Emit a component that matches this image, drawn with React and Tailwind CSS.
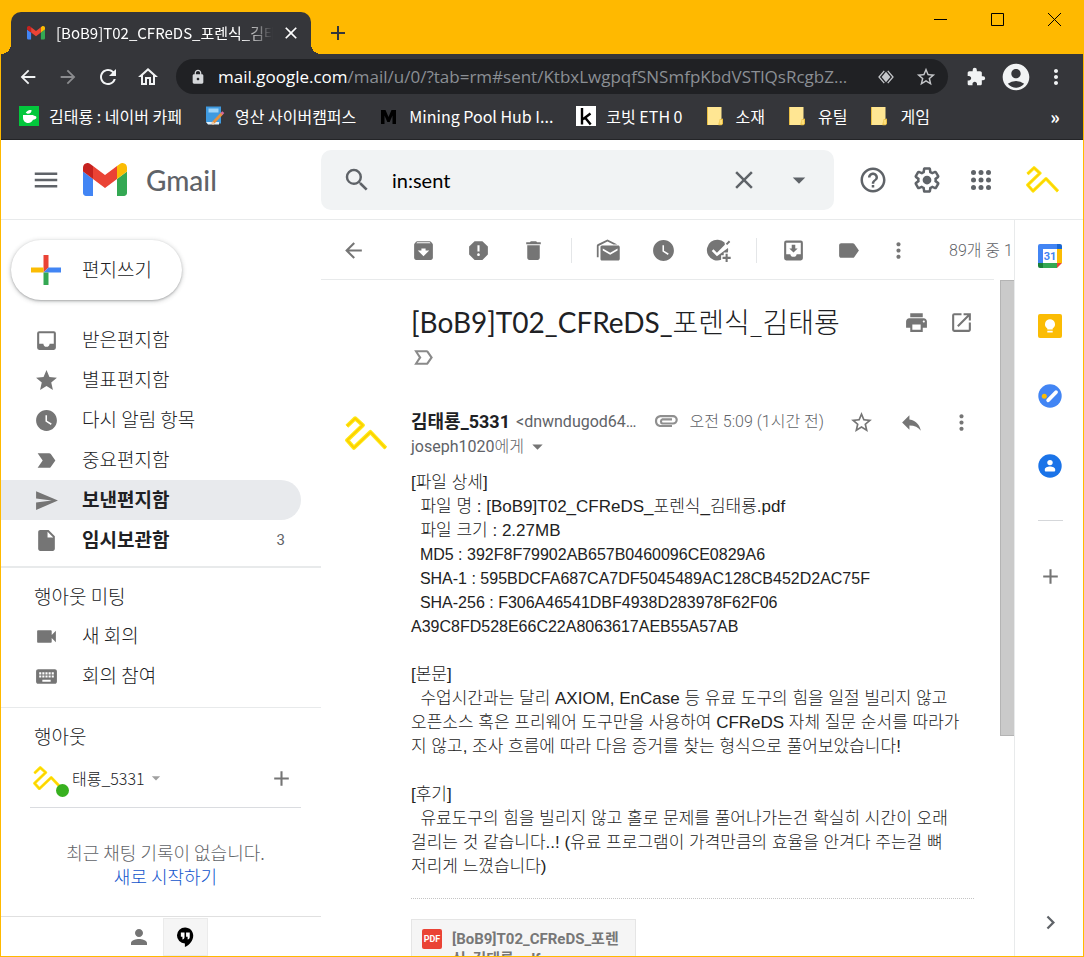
import {
  MdArrowBack, MdArrowForward, MdRefresh, MdOutlineHome, MdLock, MdStarBorder, MdExtension, MdAccountCircle,
  MdMoreVert, MdMenu, MdSearch, MdClose, MdArrowDropDown, MdHelpOutline, MdArchive, MdReport, MdDelete,
  MdWatchLater, MdLabel, MdPrint, MdOpenInNew, MdStar, MdLabelImportant, MdSend, MdInsertDriveFile,
  MdVideocam, MdKeyboard, MdPerson, MdReply, MdAdd, MdChevronRight, MdLabelImportantOutline,
} from "react-icons/md";

const UI = "font-['Noto_Sans_CJK_KR',sans-serif]";
const ROBOTO = "font-[Roboto,'Noto_Sans_CJK_KR',sans-serif]";

function GmailMark({ className }) {
  return (
    <svg viewBox="52 42 88 66" className={className} aria-hidden="true">
      <path fill="#4285f4" d="M58 108h14V74L52 59v43c0 3.32 2.69 6 6 6" />
      <path fill="#34a853" d="M120 108h14c3.32 0 6-2.69 6-6V59l-20 15" />
      <path fill="#fbbc04" d="M120 48v26l20-15v-8c0-7.42-8.47-11.65-14.4-7.2" />
      <path fill="#ea4335" d="M72 74V48l24 18 24-18v26L96 92" />
      <path fill="#c5221f" d="M52 51v8l20 15V48l-5.6-4.2c-5.94-4.45-14.4-.22-14.4 7.2" />
    </svg>
  );
}

function Squiggle({ className }) {
  return (
    <svg viewBox="0 0 33 27" className={className} fill="none" aria-hidden="true">
      <path d="M1.5 8 8 1.8l6 5.4L1.7 19 7 25l13-12.4L32 25.3" stroke="#fdea14" strokeWidth="3.2" strokeLinejoin="round" />
      <path d="M1.5 8 8 1.8l6 5.4L1.7 19 7 25l13-12.4L32 25.3" stroke="#ffcd00" strokeWidth="1.3" strokeLinejoin="round" />
    </svg>
  );
}

function SettingsIcon({ className }) {
  return (
    <svg viewBox="0 0 24 24" className={className} fill="currentColor" aria-hidden="true">
      <path d="M13.85 22.25h-3.7c-.74 0-1.36-.54-1.45-1.27l-.27-1.89c-.27-.14-.53-.29-.79-.46l-1.8.72c-.7.26-1.47-.03-1.81-.65L2.2 15.53c-.35-.66-.2-1.44.36-1.88l1.53-1.19c-.01-.15-.02-.3-.02-.46 0-.15.01-.31.02-.46l-1.52-1.19c-.59-.45-.74-1.26-.37-1.88l1.85-3.19c.34-.62 1.11-.9 1.79-.63l1.81.73c.26-.17.52-.32.78-.46l.27-1.91c.09-.7.71-1.25 1.44-1.25h3.7c.74 0 1.36.54 1.45 1.27l.27 1.89c.27.14.53.29.79.46l1.8-.72c.71-.26 1.48.03 1.82.65l1.84 3.18c.36.66.2 1.44-.36 1.88l-1.52 1.19c.01.15.02.3.02.46s-.01.31-.02.46l1.52 1.19c.56.45.72 1.23.37 1.86l-1.86 3.22c-.34.62-1.11.9-1.8.63l-1.8-.72c-.26.17-.52.32-.78.46l-.27 1.91c-.1.68-.72 1.22-1.46 1.22zm-3.23-2h2.76l.37-2.55.53-.22c.44-.18.88-.44 1.34-.78l.45-.34 2.38.96 1.38-2.4-2.03-1.58.07-.56c.03-.26.06-.51.06-.78s-.03-.53-.06-.78l-.07-.56 2.03-1.58-1.39-2.4-2.39.96-.45-.35c-.42-.32-.87-.58-1.33-.77l-.52-.22-.37-2.55h-2.76l-.37 2.55-.53.21c-.44.19-.88.44-1.34.79l-.45.33-2.38-.95-1.39 2.39 2.03 1.58-.07.56a7 7 0 0 0-.06.79c0 .26.02.53.06.78l.07.56-2.03 1.58 1.38 2.4 2.39-.96.45.35c.43.33.86.58 1.33.77l.53.22.38 2.55z" />
      <circle cx="12" cy="12" r="3.5" />
    </svg>
  );
}

function AppsIcon({ className }) {
  return (
    <svg viewBox="0 0 24 24" className={className} fill="currentColor" aria-hidden="true">
      {[6, 12, 18].map((cy) => [6, 12, 18].map((cx) => <circle key={`${cx}-${cy}`} cx={cx} cy={cy} r="2" />))}
    </svg>
  );
}

function InboxIcon({ className }) {
  return (
    <svg viewBox="0 0 24 24" className={className} fill="currentColor" aria-hidden="true">
      <path d="M19 3H5a2 2 0 0 0-2 2v14a2 2 0 0 0 2 2h14a2 2 0 0 0 2-2V5a2 2 0 0 0-2-2zm0 12h-4c0 1.66-1.34 3-3 3s-3-1.34-3-3H5V5h14v10z" />
    </svg>
  );
}

function MarkUnreadIcon({ className }) {
  return (
    <svg viewBox="0 0 24 24" className={className} fill="currentColor" aria-hidden="true">
      <path d="M20.5 6.2 11 1.5 2 5.800C1.300 6.200.8 6.900.8 7.600v10.900h1.700V7.600L11 3.400l5.800 2.800z" />
      <path d="M21.300 7.300H5.800c-.9 0-1.500.7-1.500 1.500v11.400c0 .9.700 1.500 1.500 1.500h15.500c.9 0 1.500-.7 1.500-1.500V8.800c0-.9-.7-1.500-1.500-1.500zm-.6 4.700-7.100 4-7.100-4v-1.900l7.100 4 7.100-4z" />
    </svg>
  );
}

function AddTaskIcon({ className }) {
  return (
    <svg viewBox="0 0 24 24" className={className} fill="currentColor" aria-hidden="true">
      <path d="M17.800 4.400A10 10 0 1 0 14.500 20.900V16.500H17V14h3.900a10 10 0 0 0 .2-4.500L10.500 17.500 5.500 12.500 7.200 10.800l3.300 3.300 7.600-7.600z" />
      <path d="m19 5.500 3-3 1.300 1.300-3 3zM18.800 15.200h2v2.900h2.900v2h-2.900V23h-2v-2.900h-2.900v-2h2.900z" />
    </svg>
  );
}

function MoveToIcon({ className }) {
  return (
    <svg viewBox="0 0 24 24" className={className} fill="currentColor" aria-hidden="true">
      <path d="M19 2.500H5a2 2 0 0 0-2 2v15a2 2 0 0 0 2 2h14a2 2 0 0 0 2-2v-15a2 2 0 0 0-2-2zm0 13h-4c0 1.500-1.300 2.500-3 2.500s-3-1-3-2.500H5v-11h14v11zM16 10h-2.300V6.500h-3.400V10H8l4 4 4-4z" />
    </svg>
  );
}

function ClipIcon({ className }) {
  return (
    <svg viewBox="0 0 24 12" className={className} fill="none" stroke="currentColor" strokeWidth="2.200" aria-hidden="true">
      <path d="M18 11H6.300a5 5 0 0 1 0-9.900H19a3.700 3.700 0 0 1 0 7.400H8.500a2.200 2.200 0 0 1 0-4.200H18" />
    </svg>
  );
}

function HangoutsIcon({ className }) {
  return (
    <svg viewBox="0 0 20 24" className={className} aria-hidden="true">
      <path fill="#000" d="M10 1.500a8.800 8.800 0 0 0-.3 17.600V23c4.800-2.400 9.100-6.600 9.100-12.700C18.800 5.400 14.900 1.500 10 1.500z" />
      <path fill="#fff" d="M5.300 7h4v5c0 1.500-.9 2.500-2.300 2.700v-3H5.300zM11 7h4v5c0 1.500-.9 2.500-2.300 2.700v-3H11z" />
    </svg>
  );
}

function CalendarIcon() {
  return (
    <svg viewBox="0 0 24 24" className="size-6" aria-hidden="true">
      <path fill="#4285f4" d="M2 0h17v5H5v14H0V2a2 2 0 0 1 2-2z" />
      <path fill="#1967d2" d="M19 0h3a2 2 0 0 1 2 2v3h-5z" />
      <path fill="#fbbc04" d="M19 5h5v14h-5z" />
      <path fill="#34a853" d="M5 19h14v5H5z" />
      <path fill="#188038" d="M0 19h5v5H2a2 2 0 0 1-2-2z" />
      <path fill="#ea4335" d="M19 19h5l-5 5z" />
      <path fill="#fff" d="M5 5h14v14H5z" />
      <text x="12" y="16.300" textAnchor="middle" fontSize="11" fontWeight="700" fontFamily="Roboto, sans-serif" fill="#4285f4">31</text>
    </svg>
  );
}

function KeepIcon() {
  return (
    <svg viewBox="0 0 24 24" className="size-6" aria-hidden="true">
      <rect width="24" height="24" rx="2" fill="#fbbc04" />
      <path fill="#fff" d="M12 5.200a5 5 0 0 0-2.700 9.200v1h5.400v-1A5 5 0 0 0 12 5.200zM9.300 16.800h5.400v1.700H9.300z" />
    </svg>
  );
}

function TasksIcon() {
  return (
    <svg viewBox="0 0 24 24" className="size-6" aria-hidden="true">
      <circle cx="12" cy="12" r="11.700" fill="#4285f4" />
      <path d="M10.200 16.300 18 8.200" stroke="#fff" strokeWidth="3.800" strokeLinecap="round" />
      <circle cx="6.300" cy="12.300" r="2.500" fill="#fbbc04" />
    </svg>
  );
}

function ContactsIcon() {
  return (
    <svg viewBox="0 0 24 24" className="size-6" aria-hidden="true">
      <circle cx="12" cy="12" r="11.700" fill="#1a73e8" />
      <circle cx="12" cy="8.600" r="2.700" fill="#fff" />
      <path fill="#fff" d="M6.800 16.600v-1.200c0-2 2.700-3 5.200-3s5.200 1 5.200 3v1.200a.9.900 0 0 1-.9.900H7.700a.9.900 0 0 1-.9-.9z" />
    </svg>
  );
}

function CafeIcon() {
  return (
    <svg viewBox="0 0 20 20" className="size-5" aria-hidden="true">
      <path fill="#03c73c" d="M0 0h20v20H0z" />
      <path fill="#fff" d="M4 9h10.500v.8c1.600-.3 3 .4 2.900 1.800s-1.600 2.300-3.400 2.200c-.8 2-2.500 3.200-4.800 3.200C6 17 4 14.500 4 11.500zM6.700 6.800C8 4.500 10 4 12.500 4c.3 2.400-1.500 4-4 3.800z" />
    </svg>
  );
}

function NoteIcon() {
  return (
    <svg viewBox="0 0 20 20" className="size-5" aria-hidden="true">
      <path fill="#3f9ae0" d="M1 .5h15v17H3l-2-2z" />
      <path fill="#9fd3f7" d="M3.500 2.500h10v4h-10z" />
      <path fill="#dff1fd" d="M1 16h13v2.500H3z" />
      <path stroke="#e8913c" strokeWidth="2.800" d="m8.500 16.500 8.500-9" />
      <path stroke="#f2c9a0" strokeWidth="2.800" d="m7 18 1.600-1.600" />
      <path stroke="#d76a9a" strokeWidth="2.800" d="m16.500 8 1.800-1.900" />
    </svg>
  );
}

function MiningIcon() {
  return (
    <svg viewBox="0 0 20 20" className="size-5" aria-hidden="true">
      <path fill="#000" d="M2 18V4h4.500L9.500 11l3-7H17v14h-3.500v-8.500L10.700 16H8.300L5.500 9.500V18z" />
    </svg>
  );
}

function KorbitIcon() {
  return (
    <svg viewBox="0 0 20 20" className="size-5" aria-hidden="true">
      <path fill="#fff" d="M0 0h20v20H0z" />
      <path stroke="#000" strokeWidth="2.400" fill="none" d="M6 2v16.500M14.500 7.500 7 13.200M9 11.500l5.700 7" />
    </svg>
  );
}

function FolderIcon() {
  return (
    <svg viewBox="0 0 20 20" className="size-5" aria-hidden="true">
      <path fill="#ffe693" d="M1.500 1h14v18h-14z" />
      <path fill="#e9bf45" d="M1 1h1v18H1zM12.500 18l1-4.500 3.500-1V18l-1.500 1.300h-3z" />
      <path fill="#ffdf7a" d="M13.500 14h2.500v4.300h-2.500z" />
    </svg>
  );
}

const bookmarks = [
  { icon: CafeIcon, label: "김태룡 : 네이버 카페" },
  { icon: NoteIcon, label: "영산 사이버캠퍼스" },
  { icon: MiningIcon, label: "Mining Pool Hub I..." },
  { icon: KorbitIcon, label: "코빗 ETH 0" },
  { icon: FolderIcon, label: "소재" },
  { icon: FolderIcon, label: "유틸" },
  { icon: FolderIcon, label: "게임" },
];

function ChromeButton({ label, children, className = "text-[#f1f3f4]" }) {
  return (
    <button type="button" aria-label={label} className={`flex h-9 w-10 shrink-0 items-center justify-center ${className}`}>
      {children}
    </button>
  );
}

function BrowserFrame() {
  return (
    <div className={`shrink-0 ${UI}`}>
      <div className="flex h-[53px] justify-between bg-[#ffb900]">
        <div className="flex pt-[11px] pl-[10px]">
          <div className="relative flex h-[42px] w-[300px] items-center rounded-t-[10px] bg-[#35363a] pr-2.5 pl-4">
            <span className="absolute bottom-0 -left-2.5 size-2.5 bg-[radial-gradient(circle_at_0_0,transparent_10px,#35363a_10px)]" />
            <span className="absolute -right-2.5 bottom-0 size-2.5 bg-[radial-gradient(circle_at_100%_0,transparent_10px,#35363a_10px)]" />
            <GmailMark className="w-[18px] shrink-0" />
            <span className="ml-[11px] flex-1 overflow-hidden text-[15px] leading-6 whitespace-nowrap text-white [mask-image:linear-gradient(to_right,black_86%,transparent)]">
              [BoB9]T02_CFReDS_포렌식_김태룡
            </span>
            <button type="button" aria-label="탭 닫기" className="ml-2 text-white"><MdClose className="size-5" /></button>
          </div>
          <button type="button" aria-label="새 탭" className="ml-[15px] text-[#35363a]"><MdAdd className="size-6" /></button>
        </div>
        <div className="flex h-[37px] text-black">
          <button type="button" aria-label="최소화" className="flex w-[57px] items-center justify-center">
            <svg viewBox="0 0 13 13" className="size-[13px]" stroke="currentColor"><path d="M0 6.500h13" /></svg>
          </button>
          <button type="button" aria-label="최대화" className="flex w-[57px] items-center justify-center">
            <svg viewBox="0 0 13 13" className="size-[13px]" stroke="currentColor" fill="none"><path d="M.5.5h12v12H.5z" /></svg>
          </button>
          <button type="button" aria-label="닫기" className="flex w-[57px] items-center justify-center">
            <svg viewBox="0 0 13 13" className="size-[13px]" stroke="currentColor"><path d="m0 0 13 13M13 0 0 13" /></svg>
          </button>
        </div>
      </div>
      <div className="flex h-[45px] items-center bg-[#35363a] px-[7px]">
        <ChromeButton label="뒤로"><MdArrowBack className="size-[22px]" /></ChromeButton>
        <ChromeButton label="앞으로" className="text-[#8b8c8f]"><MdArrowForward className="size-[22px]" /></ChromeButton>
        <ChromeButton label="새로고침"><MdRefresh className="size-6" /></ChromeButton>
        <ChromeButton label="홈"><MdOutlineHome className="size-6" /></ChromeButton>
        <div className="mx-2 flex h-[35px] min-w-0 flex-1 items-center rounded-full bg-[#202124] pr-[2px] pl-[14px]">
          <MdLock className="size-4 shrink-0 text-[#d5d7da]" />
          <a href="#sent" className="ml-3 min-w-0 flex-1 truncate font-['Open_Sans',sans-serif] text-[17px] leading-6 text-[#8b8f94]">
            <span className="text-white">mail.google.com</span>/mail/u/0/?tab=rm#sent/KtbxLwgpqfSNSmfpKbdVSTlQsRcgbZ...
          </a>
          <ChromeButton label="보기" className="text-[#c4c6c9]">
            <svg viewBox="0 0 18 16" className="h-[14px] w-4" aria-hidden="true">
              <path d="M7 1 1 8l6 7M11 1l6 7-6 7" fill="none" stroke="currentColor" strokeWidth="1.500" />
              <path d="m9 2 5 6-5 6-5-6z" fill="currentColor" />
            </svg>
          </ChromeButton>
          <ChromeButton label="북마크" className="text-[#c4c6c9]"><MdStarBorder className="size-[22px]" /></ChromeButton>
        </div>
        <ChromeButton label="확장 프로그램"><MdExtension className="size-5" /></ChromeButton>
        <ChromeButton label="프로필"><MdAccountCircle className="size-8" /></ChromeButton>
        <ChromeButton label="메뉴"><MdMoreVert className="size-6" /></ChromeButton>
      </div>
      <nav aria-label="북마크" className="flex h-[41px] items-center gap-[23px] border-b border-[#232427] bg-[#35363a] pr-4 pb-[6px] pl-[18px]">
        {bookmarks.map(({ icon: Icon, label }) => (
          <a key={label} href="#bookmark" className="flex items-center gap-2.5 text-[16px] leading-6 whitespace-nowrap text-white">
            <Icon />
            {label}
          </a>
        ))}
        <button type="button" aria-label="북마크 더보기" className="ml-auto w-6 text-[18px] leading-6 font-bold text-white">»</button>
      </nav>
    </div>
  );
}

function HeaderButton({ label, children }) {
  return (
    <button type="button" aria-label={label} className="flex size-[54px] shrink-0 items-center justify-center text-[#5f6368]">
      {children}
    </button>
  );
}

function GmailHeader() {
  return (
    <header className="flex h-20 shrink-0 items-center border-b border-[#e8eaeb]">
      <div className="flex w-80 shrink-0 items-center pl-[30px]">
        <button type="button" aria-label="기본 메뉴" className="text-[#5f6368]"><MdMenu className="size-[30px]" /></button>
        <a href="#inbox" className="ml-[22px] flex items-center gap-[19px] font-[Lato,sans-serif] text-[28px] leading-9 font-medium text-[#5f6368]">
          <GmailMark className="w-11" />
          Gmail
        </a>
      </div>
      <form role="search" className="flex h-[60px] min-w-0 flex-1 items-center rounded-[10px] bg-[#f1f3f4] pr-2 text-[#5f6368]">
        <button type="button" aria-label="검색" className="ml-[21px]"><MdSearch className="size-[30px]" /></button>
        <input aria-label="메일 검색" defaultValue="in:sent" className="ml-5 min-w-0 flex-1 bg-transparent font-[Lato,sans-serif] text-[20px] leading-6 text-black outline-none" />
        <button type="button" aria-label="검색 지우기" className="flex w-[55px] justify-center"><MdClose className="size-[30px]" /></button>
        <button type="button" aria-label="검색 옵션 표시" className="flex w-[55px] justify-center"><MdArrowDropDown className="size-[30px]" /></button>
      </form>
      <div className="flex items-center pr-6 pl-3">
        <HeaderButton label="지원"><MdHelpOutline className="size-[30px]" /></HeaderButton>
        <HeaderButton label="설정"><SettingsIcon className="size-[30px]" /></HeaderButton>
        <HeaderButton label="Google 앱"><AppsIcon className="size-[30px]" /></HeaderButton>
        <button type="button" aria-label="Google 계정" className="ml-[18px]"><Squiggle className="w-[33px]" /></button>
      </div>
    </header>
  );
}

const folders = [
  { icon: InboxIcon, label: "받은편지함" },
  { icon: MdStar, label: "별표편지함" },
  { icon: MdWatchLater, label: "다시 알림 항목" },
  { icon: MdLabelImportant, label: "중요편지함" },
  { icon: MdSend, label: "보낸편지함", active: true },
  { icon: MdInsertDriveFile, label: "임시보관함", bold: true, count: 3 },
];

function NavRow({ icon: Icon, label, active, bold, count }) {
  return (
    <a
      href="#folder"
      className={`mr-5 flex h-10 items-center rounded-r-full pr-4 pl-[33px] text-[19px] leading-6 text-[#202124] ${active ? "bg-[#e8eaed]" : ""} ${active || bold ? "font-bold" : "font-light"}`}
    >
      <Icon className="size-[25px] shrink-0 text-[#757575]" />
      <span className="ml-[23px] flex-1 pb-0.5">{label}</span>
      {count && <span className="font-[Roboto,sans-serif] text-[15px] font-normal text-[#5f6368]">{count}</span>}
    </a>
  );
}

function Sidebar() {
  return (
    <aside className={`flex w-80 shrink-0 flex-col ${UI}`}>
      <button type="button" className="mt-5 ml-2.5 flex h-[60px] w-[171px] shrink-0 items-center rounded-full bg-white pl-5 text-[19px] leading-6 font-light text-[#202124] shadow-[0_1px_2px_0_rgba(60,64,67,0.302),0_1px_4px_1px_rgba(60,64,67,0.2)]">
        <svg viewBox="0 0 30 30" className="size-[30px]" aria-hidden="true">
          <path fill="#ea4335" d="M12.500 0h5v12.500l-5 5z" />
          <path fill="#fbbc04" d="M0 12.500h12.500v5H0z" />
          <path fill="#4285f4" d="M17.500 12.500H30v5H12.500z" />
          <path fill="#34a853" d="M12.500 17.500h5V30h-5z" />
        </svg>
        <span className="ml-[21px] pb-[3px]">편지쓰기</span>
      </button>
      <nav aria-label="메일함" className="mt-5 pb-[6px]">
        {folders.map((f) => <NavRow key={f.label} {...f} />)}
      </nav>
      <div className="border-t-2 border-[#e8eaeb] pt-[7px]">
        <h2 className="pt-2 pl-[33px] text-[19px] leading-[26px] font-light text-[#202124]">행아웃 미팅</h2>
        <div className="mt-[7px]">
          <NavRow icon={MdVideocam} label="새 회의" />
          <NavRow icon={MdKeyboard} label="회의 참여" />
        </div>
      </div>
      <div className="mt-[11px] flex flex-1 flex-col border-t border-[#e8eaeb]">
        <h2 className="mt-[15px] pl-[33px] text-[19px] leading-[26px] font-light text-[#202124]">행아웃</h2>
        <div className="mr-5 ml-[29px] flex h-[59px] items-center border-b border-[#dadce0] pr-[7px] pl-[3px] text-[#757575]">
          <span className="relative">
            <Squiggle className="w-[30px]" />
            <span className="absolute -right-[6px] -bottom-[7px] size-[13px] rounded-full bg-[#37b01f]" />
          </span>
          <button type="button" className="ml-[9px] flex items-center text-[16px] leading-6 text-[#202124]">
            <span className="font-light">태룡_5331</span>
            <MdArrowDropDown className="ml-px size-5 text-[#a0a0a0]" />
          </button>
          <button type="button" aria-label="새 대화" className="ml-auto"><MdAdd className="size-[25px]" /></button>
        </div>
        <div className="mr-5 ml-[29px] flex flex-1 flex-col items-center pt-8 text-[18px] leading-6 font-light">
          <p className="text-[#5f6368]">최근 채팅 기록이 없습니다.</p>
          <a href="#new" className="text-[#1155cc]">새로 시작하기</a>
        </div>
        <div className="flex h-10 items-stretch justify-center border-t border-[#e0e0e0] pt-px">
          <button type="button" aria-label="연락처" className="flex w-12 items-center justify-center text-[#757575]"><MdPerson className="size-6" /></button>
          <button type="button" aria-label="행아웃 대화" className="flex w-[45px] items-center justify-center border border-[#ebebeb] bg-[#f5f5f5]"><HangoutsIcon className="h-[22px]" /></button>
        </div>
      </div>
    </aside>
  );
}

function ToolButton({ label, icon: Icon }) {
  return (
    <button type="button" aria-label={label} className="flex w-[55px] shrink-0 justify-center">
      <Icon className="size-[25px]" />
    </button>
  );
}

function Separator() {
  return (
    <span className="flex w-5 shrink-0 justify-center">
      <span className="h-[25px] w-px bg-[#e4e6e8]" />
    </span>
  );
}

function MailToolbar() {
  return (
    <div className="mr-5 flex h-[60px] shrink-0 items-center border-b border-[#e8eaeb] pt-0.5 pl-[5px] text-[#757575]">
      <ToolButton label="뒤로" icon={MdArrowBack} />
      <span className="w-[15px] shrink-0" />
      <ToolButton label="보관" icon={MdArchive} />
      <ToolButton label="스팸신고" icon={MdReport} />
      <ToolButton label="삭제" icon={MdDelete} />
      <Separator />
      <ToolButton label="읽지 않은 상태로 표시" icon={MarkUnreadIcon} />
      <ToolButton label="다시 알림" icon={MdWatchLater} />
      <ToolButton label="할 일에 추가" icon={AddTaskIcon} />
      <Separator />
      <ToolButton label="이동" icon={MoveToIcon} />
      <ToolButton label="라벨" icon={MdLabel} />
      <button type="button" aria-label="더보기" className="flex w-[45px] shrink-0 justify-center"><MdMoreVert className="size-[25px]" /></button>
      <span className={`ml-7 text-[16px] leading-6 font-light whitespace-nowrap text-[#5f6368] ${ROBOTO}`}>89개 중 1</span>
    </div>
  );
}

const bodyLines = [
  { text: "[파일 상세]" },
  { text: "  파일 명 : [BoB9]T02_CFReDS_포렌식_김태룡.pdf" },
  { text: "  파일 크기 : 2.27MB" },
  { text: "  MD5 : 392F8F79902AB657B0460096CE0829A6", hash: true },
  { text: "  SHA-1 : 595BDCFA687CA7DF5045489AC128CB452D2AC75F", hash: true },
  { text: "  SHA-256 : F306A46541DBF4938D283978F62F06", hash: true },
  { text: "A39C8FD528E66C22A8063617AEB55A57AB", hash: true },
  { text: "" },
  { text: "[본문]" },
  { text: "  수업시간과는 달리 AXIOM, EnCase 등 유료 도구의 힘을 일절 빌리지 않고" },
  { text: "오픈소스 혹은 프리웨어 도구만을 사용하여 CFReDS 자체 질문 순서를 따라가" },
  { text: "지 않고, 조사 흐름에 따라 다음 증거를 찾는 형식으로 풀어보았습니다!" },
  { text: "" },
  { text: "[후기]" },
  { text: "  유료도구의 힘을 빌리지 않고 홀로 문제를 풀어나가는건 확실히 시간이 오래" },
  { text: "걸리는 것 같습니다..! (유료 프로그램이 가격만큼의 효율을 안겨다 주는걸 뼈" },
  { text: "저리게 느꼈습니다)" },
];

function Message() {
  return (
    <article className="min-w-0 flex-1 overflow-hidden pt-6">
      <div className="flex items-start pr-4 pl-[90px] text-[#757575]">
        <h1 className="flex-1 font-[Lato,'Noto_Sans_CJK_KR',sans-serif] text-[28px] leading-9 whitespace-nowrap text-[#202124]">
          [BoB9]T02_CFReDS_<span className="font-light">포렌식_김태룡</span>
        </h1>
        <button type="button" aria-label="인쇄" className="flex h-9 w-[45px] items-center justify-center"><MdPrint className="size-[25px]" /></button>
        <button type="button" aria-label="새 창에서 열기" className="flex h-9 w-[45px] items-center justify-center"><MdOpenInNew className="size-[25px]" /></button>
      </div>
      <button type="button" aria-label="중요" className="mt-[5px] ml-[90px] block text-[#8a8a8a]"><MdLabelImportantOutline className="size-[25px]" /></button>
      <div className={`mt-10 flex items-start pr-[14px] text-[#757575] ${ROBOTO}`}>
        <div className="w-[90px] shrink-0 pt-[6px] pl-6"><Squiggle className="w-[42px]" /></div>
        <div className="min-w-0 flex-1 text-[16px] leading-6 text-[#5f6368]">
          <div className="flex items-center whitespace-nowrap">
            <h3 className="text-[18px] leading-6 font-bold text-[#202124]">김태룡_5331</h3>
            <span className="ml-[6px] leading-6">&lt;dnwndugod64…</span>
          </div>
          <button type="button" className="flex items-center leading-6 font-light">
            <span><span className="font-normal">joseph1020</span>에게</span>
            <MdArrowDropDown className="ml-px size-[25px] text-[#757575]" />
          </button>
        </div>
        <ClipIcon className="mt-[5px] mr-3 h-3 w-6 text-[#8f8f8f]" />
        <time className="text-[16px] leading-6 font-light text-[#5f6368]">오전 5:09 (1시간 전)</time>
        <div className="ml-3 flex h-6 items-center">
          <button type="button" aria-label="별표" className="flex w-[50px] justify-center"><MdStarBorder className="size-[25px]" /></button>
          <button type="button" aria-label="답장" className="flex w-[50px] justify-center"><MdReply className="size-[25px]" /></button>
          <button type="button" aria-label="더보기" className="flex w-[50px] justify-center"><MdMoreVert className="size-[25px]" /></button>
        </div>
      </div>
      <div className="mr-[26px] ml-[90px]">
        <div className="mt-3 font-['Liberation_Sans','Noto_Sans_CJK_KR',sans-serif] leading-6 whitespace-pre text-[#222222]">
          {bodyLines.map(({ text, hash }, i) => (
            <p key={i} className={hash ? "h-6 text-[16px] leading-6" : "h-6 text-[17px] leading-6 font-light"}>{text}</p>
          ))}
        </div>
        <div className="mt-[19px] border-t border-dotted border-[#c4c4c4] pt-5">
          <a href="#attachment" className={`flex w-[225px] items-start gap-2.5 border border-[#e5e5e5] bg-[#f5f5f5] px-2.5 py-[9px] text-[15px] leading-5 font-bold text-[#777777] ${ROBOTO}`}>
            <span className="flex size-5 shrink-0 items-center justify-center rounded-[2px] bg-[#ea4335] text-[9px] leading-none text-white">PDF</span>
            <span>[BoB9]T02_CFReDS_포렌<br />식_김태룡.pdf</span>
          </a>
        </div>
      </div>
    </article>
  );
}

function SidePanel() {
  return (
    <aside className="flex w-[69px] shrink-0 flex-col items-center border-l border-[#e8eaeb] pt-6 pl-0.5 text-[#757575]">
      <div className="flex flex-col items-center gap-[46px]">
        <button type="button" aria-label="캘린더"><CalendarIcon /></button>
        <button type="button" aria-label="Keep"><KeepIcon /></button>
        <button type="button" aria-label="Tasks"><TasksIcon /></button>
        <button type="button" aria-label="주소록"><ContactsIcon /></button>
      </div>
      <span className="mt-[42px] h-px w-[25px] bg-[#d5d7da]" />
      <button type="button" aria-label="부가기능 설치하기" className="mt-[43px]"><MdAdd className="size-[25px]" /></button>
      <button type="button" aria-label="측면 패널 숨기기" className="mt-auto mb-5 text-[#5f6368]"><MdChevronRight className="size-[27px]" /></button>
    </aside>
  );
}

export default function App() {
  return (
    <div className="flex h-screen flex-col overflow-hidden border border-[#ffb900] bg-white">
      <BrowserFrame />
      <GmailHeader />
      <div className="flex min-h-0 flex-1">
        <Sidebar />
        <main className="flex min-w-0 flex-1 flex-col overflow-hidden">
          <MailToolbar />
          <div className="flex min-h-0 flex-1">
            <Message />
            <div className="w-[14px] shrink-0">
              <div className="h-[456px] border border-r-0 border-[#b4b4b4] bg-[#cacaca]" />
            </div>
          </div>
        </main>
        <SidePanel />
      </div>
    </div>
  );
}
